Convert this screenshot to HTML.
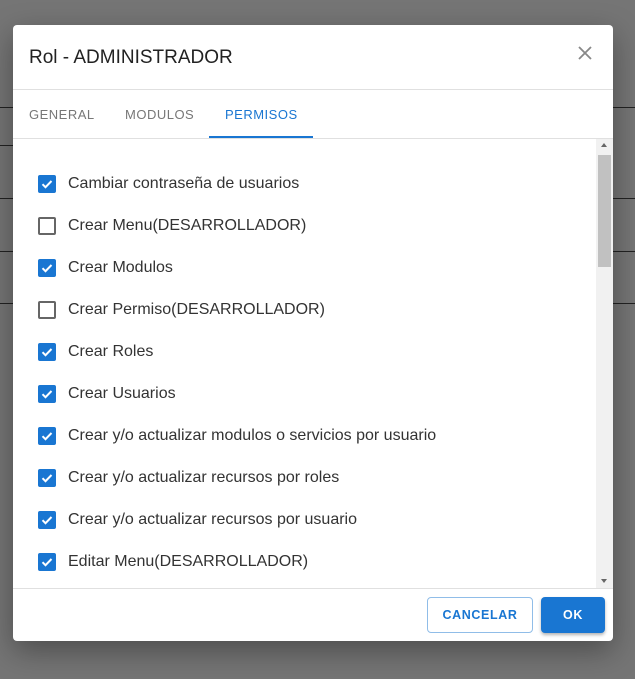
<!DOCTYPE html>
<html><head><style>
body{margin:0;width:635px;height:679px;background:#757575;position:relative;overflow:hidden;font-family:"Liberation Sans",sans-serif}
.bl{position:absolute;height:1px;background:#222}
.dlg{position:absolute;left:13px;top:25px;width:600px;height:616px;background:#fff;border-radius:4px;box-shadow:0 10px 30px rgba(0,0,0,.35)}
.title{position:absolute;left:16px;top:22px;font-size:19px;color:#222}
.hr{position:absolute;left:0;width:600px;height:1px;background:#e0e0e0}
.tab{position:absolute;top:82px;font-size:13px;letter-spacing:.5px;color:#777}
.row{position:absolute;left:25px;height:20px;display:flex;align-items:center;font-size:16px;color:#333}
.cb{width:14px;height:14px;border:2px solid #666;border-radius:2px;margin-right:12px;box-sizing:content-box}
.cb.on{background:#1976d2;border-color:#1976d2;position:relative}
.cb.on svg{position:absolute;left:0;top:0}
.sb{position:absolute;left:583px;top:114px;width:17px;height:449px;background:#f1f1f1}
.btn{position:absolute;top:572px;height:36px;border-radius:4px;font-size:12.5px;font-weight:bold;letter-spacing:.6px;display:flex;align-items:center;justify-content:center;box-sizing:border-box}
</style></head><body>
<div class="bl" style="left:0;width:13px;top:107px"></div>
<div class="bl" style="left:0;width:13px;top:145px"></div>
<div class="bl" style="left:0;width:13px;top:198px"></div>
<div class="bl" style="left:0;width:13px;top:251px"></div>
<div class="bl" style="left:0;width:13px;top:303px"></div>
<div class="bl" style="left:613px;width:22px;top:107px"></div>
<div class="bl" style="left:613px;width:22px;top:198px"></div>
<div class="bl" style="left:613px;width:22px;top:251px"></div>
<div class="bl" style="left:613px;width:22px;top:303px"></div>
<div class="dlg">
<div class="title">Rol - ADMINISTRADOR</div>
<svg style="position:absolute;left:564px;top:20px" width="16" height="16" viewBox="0 0 16 16"><path d="M2 2L14 14M14 2L2 14" stroke="#888" stroke-width="1.8"/></svg>
<div class="hr" style="top:64px"></div>
<div class="tab" style="left:16px">GENERAL</div>
<div class="tab" style="left:112px">MODULOS</div>
<div class="tab" style="left:212px;color:#1976d2">PERMISOS</div>
<div style="position:absolute;left:196px;top:111px;width:104px;height:2px;background:#1976d2"></div>
<div class="hr" style="top:113px"></div>
<div class="sb"><div style="position:absolute;left:2px;top:16px;width:13px;height:112px;background:#c1c1c1"></div>
<div style="position:absolute;left:5px;top:4px;border:3.5px solid transparent;border-bottom:4px solid #666;border-top:0"></div>
<div style="position:absolute;left:5px;top:440px;border:3.5px solid transparent;border-top:4px solid #666;border-bottom:0"></div></div>
<div id="rows"></div>
<div class="hr" style="top:563px"></div>
<div class="btn" style="left:414px;width:106px;border:1px solid #90bde8;color:#1976d2">CANCELAR</div>
<div class="btn" style="left:528px;width:64px;background:#1976d2;color:#fff;box-shadow:0 2px 3px rgba(0,0,0,.3)">OK</div>
</div>
<script>
var items=[["Cambiar contraseña de usuarios",1],["Crear Menu(DESARROLLADOR)",0],["Crear Modulos",1],["Crear Permiso(DESARROLLADOR)",0],["Crear Roles",1],["Crear Usuarios",1],["Crear y/o actualizar modulos o servicios por usuario",1],["Crear y/o actualizar recursos por roles",1],["Crear y/o actualizar recursos por usuario",1],["Editar Menu(DESARROLLADOR)",1]];
var h="";items.forEach(function(it,i){h+='<div class="row" style="top:'+(149+i*42)+'px"><div class="cb'+(it[1]?' on':'')+'">'+(it[1]?'<svg width="14" height="14" viewBox="0 0 14 14"><path d="M2.5 7.2l3 3 6-6.2" stroke="#fff" stroke-width="2" fill="none"/></svg>':'')+'</div>'+it[0]+'</div>'});
document.getElementById("rows").innerHTML=h;
</script>
</body></html>
